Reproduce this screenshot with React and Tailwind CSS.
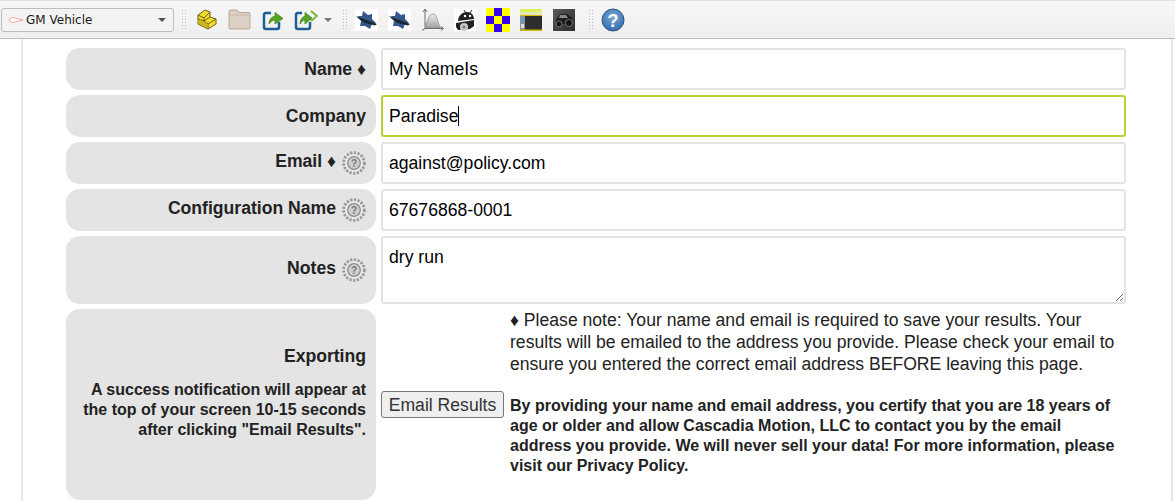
import { useState } from "react";

const Gripper = () => (
  <div className="grid grid-cols-2 gap-x-[2px] gap-y-[2px] w-[4px] mx-[8px]">
    {Array.from({ length: 14 }).map((_, i) => (
      <span key={i} className="w-[1px] h-[1px] bg-[#bdbdbd]" />
    ))}
  </div>
);

const ProfileIcon = () => (
  <svg width="16" height="8" viewBox="0 0 16 8" className="shrink-0">
    <path d="M1 4 C2 1.500 5 1 7 2 L15 4 L7 6 C5 7 2 6.500 1 4Z" fill="#fff" stroke="#f4a0a0" strokeWidth="1" />
  </svg>
);

const StairsIcon = () => (
  <svg width="20" height="22" viewBox="0 0 20 22">
    <path d="M1 6 L8 1 L13 3 V8 L19 10 V15 L11 20 L1 15 Z" fill="#f2dc2e" stroke="#6b5f10" strokeWidth="1" />
    <path d="M1 6 L7 9 L13 3 M7 9 V12 M1 10 L7 12 L13 8 M7 12 L11 15 L19 10 M11 15 V20" fill="none" stroke="#6b5f10" strokeWidth="1" />
    <path d="M1.500 10.500 L7 12.500 L10.500 15.300 V19.300 L1.500 14.700Z" fill="#d2b51d" />
  </svg>
);

const FolderIcon = () => (
  <svg width="23" height="21" viewBox="0 0 23 21">
    <path d="M1 3 Q1 1 3 1 H9 L11 3.500 H21 Q22 3.500 22 5 V19 Q22 20 21 20 H2 Q1 20 1 19 Z" fill="#dccfc3" stroke="#b9a797" strokeWidth="1" />
    <path d="M1.500 6 H21.500" stroke="#c9b9aa" strokeWidth="1" />
  </svg>
);

const ExportIcon = () => (
  <svg width="22" height="22" viewBox="0 0 22 22">
    <path d="M9 4 H4 Q2 4 2 6 V18 Q2 20 4 20 H15 Q17 20 17 18 V13" fill="none" stroke="#1f5d96" strokeWidth="2.500" />
    <path d="M7 15 C7 10 10 7.500 13 7.500 V3.500 L21 9.500 L13 15 V11 C10.500 11 9 12.500 7 15Z" fill="#58a421" stroke="#3e7d14" strokeWidth="0.700" />
  </svg>
);

const ExportAllIcon = () => (
  <svg width="24" height="22" viewBox="0 0 24 22">
    <path d="M8 4 H4 Q2 4 2 6 V18 Q2 20 4 20 H14 Q16 20 16 18 V13" fill="none" stroke="#1f5d96" strokeWidth="2.500" />
    <path d="M6 15 C6 10 9 7.500 11 7.500 V3.500 L18 9 L11 15 V11 C9 11 8 12.500 6 15Z" fill="#58a421" stroke="#3e7d14" strokeWidth="0.700" />
    <path d="M17 2 L23 7 L17 12" fill="none" stroke="#6fb52e" strokeWidth="1.800" />
  </svg>
);

const StarIcon = () => (
  <svg width="23" height="22" viewBox="0 0 23 22" className="bg-white">
    <path d="M3 7 L7 7 L8 2 L13 6 L17 5 L17 10 L21 14 L17 15 L15 20 L10 17 L5 17 L6 12 Z" fill="#34588c" />
    <path d="M1 7 L10 10.500 L22 15 L20 16.500 L10 14 L4 10Z" fill="#1c2630" />
  </svg>
);

const ChartIcon = () => (
  <svg width="23" height="24" viewBox="0 0 23 24">
    <defs>
      <linearGradient id="chartFill" x1="0" y1="0" x2="0" y2="1">
        <stop offset="0%" stopColor="#ececec" />
        <stop offset="100%" stopColor="#9f9f9f" />
      </linearGradient>
    </defs>
    <path d="M5 20 V15 C7 14 7 6 12 6 C17 6 16 16 20 20Z" fill="url(#chartFill)" stroke="#8f8f8f" strokeWidth="0.700" />
    <path d="M4 1.500 V20.500 H22 M2 4 L4 1 L6 4 M20 18.500 L22.500 20.500 L20 22.500 M4 20.500 L1 22.500" fill="none" stroke="#6e6e6e" strokeWidth="1" />
  </svg>
);

const RobotIcon = () => (
  <svg width="22" height="22" viewBox="0 0 22 22" className="bg-white">
    <path d="M10 1 L12 4 M18 1 L16 4" stroke="#222" strokeWidth="1" />
    <path d="M4 12 C4 7 8 3 13 3 C17 3 20 6 20 10 Z" fill="#222" />
    <circle cx="11" cy="7" r="1.200" fill="#fff" />
    <circle cx="16" cy="7" r="1.200" fill="#fff" />
    <path d="M2 14 L20 11 L20 17 L16 20 L4 21 L2 18Z" fill="#222" />
    <circle cx="10" cy="18" r="4" fill="#c9c9c9" />
    <circle cx="10" cy="18" r="1.600" fill="#777" />
  </svg>
);

const CheckerIcon = () => (
  <div className="grid grid-cols-3 w-[24px] h-[24px]">
    {["#ffff00", "#3a00e8", "#ffff00", "#3a00e8", "#ffff00", "#3a00e8", "#ffff00", "#3a00e8", "#ffff00"].map((c, i) => (
      <span key={i} style={{ backgroundColor: c }} />
    ))}
  </div>
);

const PanelIcon = () => (
  <svg width="22" height="22" viewBox="0 0 22 22">
    <rect width="22" height="22" fill="#2d2d2d" />
    <rect width="22" height="3" fill="#d9f35a" />
    <rect y="3" width="22" height="3" fill="#e3e8b8" />
    <rect y="6" width="22" height="1" fill="#d6b800" />
    <rect y="7" width="5" height="15" fill="#8f8f8f" />
    <rect x="1" y="9" width="3" height="4" fill="#4f9fd8" />
    <rect x="1" y="15" width="3" height="4" fill="#ddd" />
    <rect y="20.500" width="22" height="1.500" fill="#d6b800" />
  </svg>
);

const CarIcon = () => (
  <svg width="22" height="22" viewBox="0 0 22 22">
    <defs>
      <linearGradient id="carBg" x1="0" y1="0" x2="1" y2="1">
        <stop offset="0%" stopColor="#5a5a5a" />
        <stop offset="100%" stopColor="#2c2c2c" />
      </linearGradient>
    </defs>
    <rect width="22" height="22" fill="url(#carBg)" />
    <path d="M3 11 L7 5 H14 L19 9 V15 H3Z" fill="#1d1d1d" />
    <path d="M7 6 H13 L15 9 H6Z" fill="#8a8a8a" />
    <circle cx="6" cy="15" r="3" fill="#111" stroke="#8a8a8a" strokeWidth="0.800" />
    <circle cx="16" cy="14" r="3.500" fill="#111" stroke="#8a8a8a" strokeWidth="0.800" />
  </svg>
);

const HelpIcon = () => (
  <svg width="24" height="24" viewBox="0 0 24 24">
    <defs>
      <radialGradient id="helpBlue" cx="50%" cy="35%" r="70%">
        <stop offset="0%" stopColor="#7aa7d8" />
        <stop offset="100%" stopColor="#2f6aa8" />
      </radialGradient>
    </defs>
    <circle cx="12" cy="12" r="11" fill="url(#helpBlue)" stroke="#2b5583" strokeWidth="1" />
    <text x="12" y="18.500" textAnchor="middle" fontSize="18" fontWeight="700" fill="#fff" fontFamily="Liberation Sans, sans-serif">?</text>
  </svg>
);

const GearHelp = () => (
  <svg width="24" height="24" viewBox="0 0 24 24" className="shrink-0">
    <circle cx="12" cy="12" r="10.300" fill="none" stroke="#9a9a9a" strokeWidth="3" strokeDasharray="2.200 1.500" />
    <circle cx="12" cy="12" r="8.200" fill="none" stroke="#f0f0f0" strokeWidth="1" />
    <circle cx="12" cy="12" r="6.300" fill="#cfcfcf" stroke="#8a8a8a" strokeWidth="1.200" />
    <text x="12" y="15.500" textAnchor="middle" fontSize="10" fontWeight="700" fill="#777" fontFamily="Liberation Sans, sans-serif">?</text>
  </svg>
);

const Toolbar = () => (
  <div className="h-[39px] flex items-center pl-[1px] bg-gradient-to-b from-[#f7f7f7] to-[#efefef] border-b border-[#bcbcbc] border-t border-t-[#e2e2e2] font-['DejaVu_Sans',sans-serif]">
    <div className="w-[173px] h-[24px] flex items-center pl-[6px] pr-[7px] rounded-[3px] border border-[#bdbdbd] bg-[#f3f3f3] text-[12px] text-[#1a1a1a]">
      <ProfileIcon />
      <span className="ml-[2px] flex-1">GM Vehicle</span>
      <span className="w-0 h-0 border-l-[4px] border-r-[4px] border-t-[4px] border-l-transparent border-r-transparent border-t-[#555]" />
    </div>
    <Gripper />
    <div className="flex items-center gap-[11px] ml-[3px]">
      <StairsIcon />
      <FolderIcon />
      <ExportIcon />
      <div className="flex items-center gap-[6px] -ml-[1px]">
        <ExportAllIcon />
        <span className="w-0 h-0 border-l-[4px] border-r-[4px] border-t-[4px] border-l-transparent border-r-transparent border-t-[#777]" />
      </div>
    </div>
    <div className="ml-[3px]"><Gripper /></div>
    <div className="flex items-center gap-[10px]">
      <StarIcon />
      <StarIcon />
      <ChartIcon />
      <RobotIcon />
      <CheckerIcon />
      <PanelIcon />
      <div className="ml-[1px]"><CarIcon /></div>
    </div>
    <div className="ml-[6px]"><Gripper /></div>
    <HelpIcon />
  </div>
);

const Label = ({ children, className = "" }) => (
  <div className={`w-[310px] shrink-0 rounded-[14px] bg-[#e4e4e4] pr-[10px] flex items-center justify-end gap-[6px] font-bold text-[#222] ${className}`}>
    {children}
  </div>
);

const Field = ({ label, value, onChange, help, diamond }) => (
  <div className="flex gap-[5px] h-[42px]">
    <Label>
      <span className={help ? "pb-[4px]" : ""}>{label}{diamond && " ♦"}</span>
      {help && <GearHelp />}
    </Label>
    <input
      type="text"
      value={value}
      onChange={(e) => onChange(e.target.value)}
      className="w-[745px] px-[6px] border-2 border-[#e4e4e4] rounded-[3px] bg-white text-black outline-none"
    />
  </div>
);

export default function App() {
  const [name, setName] = useState("My NameIs");
  const [email, setEmail] = useState("against@policy.com");
  const [config, setConfig] = useState("67676868-0001");
  const [notes, setNotes] = useState("dry run");

  return (
    <div className="h-[501px] overflow-hidden bg-white font-['Liberation_Sans',Arial,sans-serif] text-[17.6px]">
      <Toolbar />
      <div className="h-[462px] ml-[21px] w-[1152px] border-x-[2px] border-[#e8e8e8] pl-[43px] pt-[9px] flex flex-col gap-[5px]">
        <Field label="Name" diamond value={name} onChange={setName} />

        {/* Company is focused, caret is drawn */}
        <div className="flex gap-[5px] h-[42px]">
          <Label><span>Company</span></Label>
          <div className="w-[745px] px-[6px] border-2 border-[#b3d335] rounded-[3px] bg-white text-black flex items-center">
            <span>Paradise</span>
            <span className="w-[1px] h-[20px] bg-black" />
          </div>
        </div>

        <Field label="Email" diamond help value={email} onChange={setEmail} />
        <Field label="Configuration Name" help value={config} onChange={setConfig} />

        <div className="flex gap-[5px] h-[68px]">
          <Label>
            <span className="pb-[4px]">Notes</span>
            <GearHelp />
          </Label>
          <textarea
            value={notes}
            onChange={(e) => setNotes(e.target.value)}
            className="w-[745px] px-[6px] pt-[9px] pb-[7px] border-2 border-[#e4e4e4] rounded-[3px] bg-white text-black outline-none resize-y leading-[20px]"
          />
        </div>

        <div className="flex gap-[5px] h-[191px]">
          <Label className="flex-col !items-end !justify-center !gap-0 text-right pb-[26px]">
            <div className="mb-[11px]">Exporting</div>
            <div className="text-[16px] leading-[20px]">
              A success notification will appear at
              <br />
              the top of your screen 10-15 seconds
              <br />
              after clicking "Email Results".
            </div>
          </Label>
          <div className="flex items-center">
            <button className="w-[123px] h-[27px] mt-[-1px] pb-[4px] rounded-[3px] border border-[#777] bg-[#efefef] text-[#333] whitespace-nowrap">
              Email Results
            </button>
          </div>
          <div className="w-[610px] ml-[1px] text-[#222]">
            <p className="leading-[22px]">
              ♦ Please note: Your name and email is required to save your results. Your
              results will be emailed to the address you provide. Please check your email to
              ensure you entered the correct email address BEFORE leaving this page.
            </p>
            <p className="mt-[21px] text-[16px] font-bold leading-[20px]">
              By providing your name and email address, you certify that you are 18 years of
              age or older and allow Cascadia Motion, LLC to contact you by the email
              address you provide. We will never sell your data! For more information, please
              visit our Privacy Policy.
            </p>
          </div>
        </div>
      </div>
    </div>
  );
}
